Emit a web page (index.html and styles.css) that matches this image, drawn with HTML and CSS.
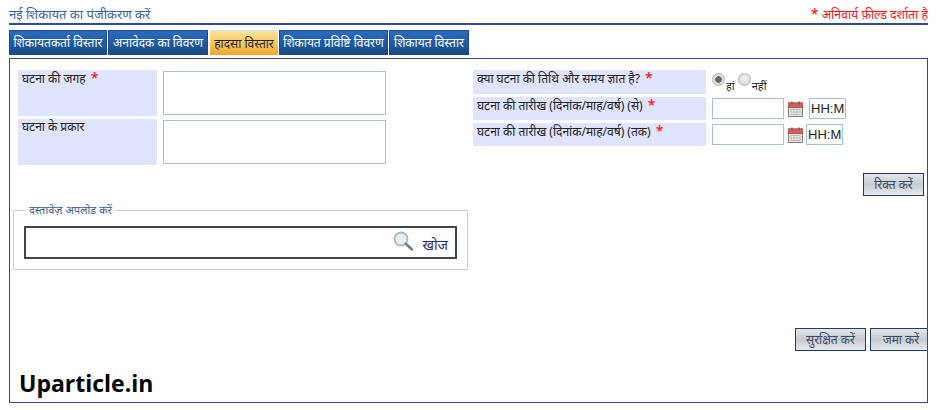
FILE: index.html
```html
<!DOCTYPE html>
<html lang="hi">
<head>
<meta charset="utf-8">
<title>नई शिकायत का पंजीकरण करें</title>
<link rel="stylesheet" href="styles.css">
</head>
<body>
<div class="page">
  <header class="head">
    <h1 class="title">नई शिकायत का पंजीकरण करें</h1>
    <p class="note"><span class="star">*</span> अनिवार्य फ़ील्ड दर्शाता है</p>
  </header>
  <nav class="tabs">
    <a class="tab t1">शिकायतकर्ता विस्तार</a>
    <a class="tab t2">अनावेदक का विवरण</a>
    <a class="tab t3 active">हादसा विस्तार</a>
    <a class="tab t4">शिकायत प्रविष्टि विवरण</a>
    <a class="tab t5">शिकायत विस्तार</a>
  </nav>
  <main class="panel">
    <div class="columns">
      <div class="col-left">
        <div class="lrow">
          <label class="label llabel">घटना की जगह <span class="star">*</span></label>
          <textarea class="area"></textarea>
        </div>
        <div class="lrow">
          <label class="label llabel">घटना के प्रकार</label>
          <textarea class="area"></textarea>
        </div>
      </div>
      <div class="col-right">
        <div class="rrow r1">
          <label class="label rlabel">क्या घटना की तिथि और समय ज्ञात है? <span class="star">*</span></label>
          <div class="radios">
            <input class="radio" type="radio" name="known" checked><span class="rtext">हां</span>
            <input class="radio" type="radio" name="known"><span class="rtext">नहीं</span>
          </div>
        </div>
        <div class="rrow r2">
          <label class="label rlabel">घटना की तारीख (दिनांक/माह/वर्ष) (से) <span class="star">*</span></label>
          <input class="date" type="text">
          <svg class="cal" viewBox="0 0 15 16" width="15" height="16"><rect x="0.5" y="2" width="14" height="13.5" fill="#e9e4dc" stroke="#8a7a70"/><rect x="0.5" y="2" width="14" height="4.5" fill="#d9605c" stroke="#b4524e"/><rect x="3" y="0.5" width="1.6" height="3" fill="#8a5a55"/><rect x="10.4" y="0.5" width="1.6" height="3" fill="#8a5a55"/><path d="M3 8.5h9v5H3zM6 8.5v5M9 8.5v5M3 11h9" fill="#f4f4ee" stroke="#a3b3ad" stroke-width="0.8"/></svg>
          <input class="time tgap" type="text" value="HH:MM">
        </div>
        <div class="rrow r3">
          <label class="label rlabel">घटना की तारीख (दिनांक/माह/वर्ष) (तक) <span class="star">*</span></label>
          <input class="date" type="text">
          <svg class="cal" viewBox="0 0 15 16" width="15" height="16"><rect x="0.5" y="2" width="14" height="13.5" fill="#e9e4dc" stroke="#8a7a70"/><rect x="0.5" y="2" width="14" height="4.5" fill="#d9605c" stroke="#b4524e"/><rect x="3" y="0.5" width="1.6" height="3" fill="#8a5a55"/><rect x="10.4" y="0.5" width="1.6" height="3" fill="#8a5a55"/><path d="M3 8.5h9v5H3zM6 8.5v5M9 8.5v5M3 11h9" fill="#f4f4ee" stroke="#a3b3ad" stroke-width="0.8"/></svg>
          <input class="time" type="text" value="HH:MM">
        </div>
      </div>
    </div>
    <div class="reset-row"><button class="btn reset" type="button">रिक्त करें</button></div>
    <fieldset class="upload">
      <legend class="legend">दस्तावेज़ अपलोड करें</legend>
      <div class="searchbox">
        <svg class="lens" viewBox="0 0 20 20" width="20" height="20"><circle cx="8" cy="8" r="6.5" fill="#e6eef6" stroke="#a9b6c2" stroke-width="1.8"/><path d="M12.8 12.8L19 18.5" stroke="#7d7d7d" stroke-width="2.6" stroke-linecap="round"/></svg>
        <a class="find">खोज</a>
      </div>
    </fieldset>
    <div class="save-row">
      <button class="btn save" type="button">सुरक्षित करें</button>
      <button class="btn submit" type="button">जमा करें</button>
    </div>
    <div class="brand">Uparticle.in</div>
  </main>
</div>
</body>
</html>
```
FILE: styles.css
```css
* { box-sizing: border-box; }
html, body { margin: 0; padding: 0; background: #fff; }
body { font-family: "Noto Sans", "Noto Sans Devanagari", "Liberation Sans", sans-serif; font-size: 12px; overflow: hidden; height: 410px; }
.page { margin-left: 9px; width: 919px; padding-top: 4px; }
.head { display: flex; justify-content: space-between; align-items: center; height: 21px; border-bottom: 2px solid #2f4b96; overflow: hidden; white-space: nowrap; }
.title { margin: 0; font-size: 13px; font-weight: normal; color: #3a62a8; }
.note { margin: 0; font-size: 12.3px; color: #f01818; }
.star { color: #f00; font-size: 14px; }
.label .star { margin-left: 2px; }
.tabs { display: flex; height: 25px; margin-top: 5px; gap: 1px; }
.tab { display: flex; align-items: center; justify-content: center; height: 25px; color: #fff; font-size: 12px; white-space: nowrap; background: linear-gradient(#2b6cc0, #174a86); border: 1px solid #1b4a88; }
.t1 { width: 98px; }
.t2 { width: 100px; }
.t3 { width: 68px; margin-left: 1px; }
.t4 { width: 109px; }
.t5 { width: 80px; }
.tab.active { color: #222; background: linear-gradient(#fde59a, #f1a82c); border: 0; border-top: 1px solid #cfe3ea; }
.panel { display: flex; flex-direction: column; height: 345px; margin-top: 3px; border: 1px solid #2f4b96; padding: 11px 3px 0 8px; overflow: hidden; }
.columns { display: flex; gap: 87px; }
.col-left { display: flex; flex-direction: column; gap: 3px; }
.lrow { display: flex; gap: 6px; height: 46px; }
.label { display: block; background: #dfe4ff; color: #222; padding: 0 4px; font-size: 12px; line-height: 16px; }
.llabel { width: 139px; }
.area { display: block; width: 223px; height: 44px; margin-top: 1px; border: 1px solid #a6c0e4; background: #fff; resize: none; outline: 0; padding: 0; }
.col-right { display: flex; flex-direction: column; gap: 3px; }
.rrow { display: flex; align-items: flex-start; }
.r1 { height: 24px; }
.r2, .r3 { height: 23px; }
.rlabel { width: 233px; height: 100%; margin-right: 6px; }
.radios { display: flex; align-items: flex-start; padding-top: 3px; }
.radio { appearance: none; width: 13px; height: 13px; margin: 0 1px 0 0; border-radius: 50%; border: 1px solid #b5b5b5; background: radial-gradient(circle at 50% 40%, #f2f2f2, #d2d2d2); }
.radio:checked { background: radial-gradient(circle, #666 0 3px, #dcdcdc 3.5px); }
.rtext { font-size: 11px; line-height: 14px; margin-top: 6px; color: #222; margin-right: 3px; }
.date { width: 72px; height: 21px; margin-top: 1px; border: 1px solid #a6c0e4; padding: 0; outline: 0; }
.cal { margin: 4px 0 0 4px; flex: none; }
.time { width: 37px; height: 21px; margin: 1px 0 0 3px; border: 1px solid #a6c0e4; padding: 0 0 0 1px; outline: 0; font: 13px "Liberation Sans", sans-serif; color: #222; }
.tgap { margin-left: 6px; }
.reset-row { display: flex; justify-content: flex-end; margin-top: 8px; }
.btn { height: 23px; padding: 0; border: 1px solid #1c3b70; font: 12px "Noto Sans", "Liberation Sans", sans-serif; color: #3d4a62; background: linear-gradient(#e4e7ea, #c6ccd2 50%, #e6e9ec); white-space: nowrap; }
.reset { width: 61px; }
.upload { width: 455px; height: 67px; margin: 7px 0 0 -5px; padding: 0 10px; border: 1px solid #ccc; }
.legend { margin-left: 1px; padding: 0 4px; font-size: 11px; line-height: 14px; color: #3b5a96; }
.searchbox { display: flex; align-items: center; justify-content: flex-end; height: 33px; margin-top: 9px; border: 2px solid #444; padding: 0 7px 0 0; }
.lens { margin-right: 10px; margin-bottom: 3px; }
.find { color: #2b2a85; font-size: 14px; margin-top: 4px; }
.save-row { display: flex; justify-content: flex-end; gap: 4px; margin-top: 58px; margin-right: -8px; }
.save { width: 71px; }
.submit { width: 62px; }
.brand { margin: 19px 0 0 1px; font: bold 23px/26px "Open Sans", sans-serif; color: #000; }
```
